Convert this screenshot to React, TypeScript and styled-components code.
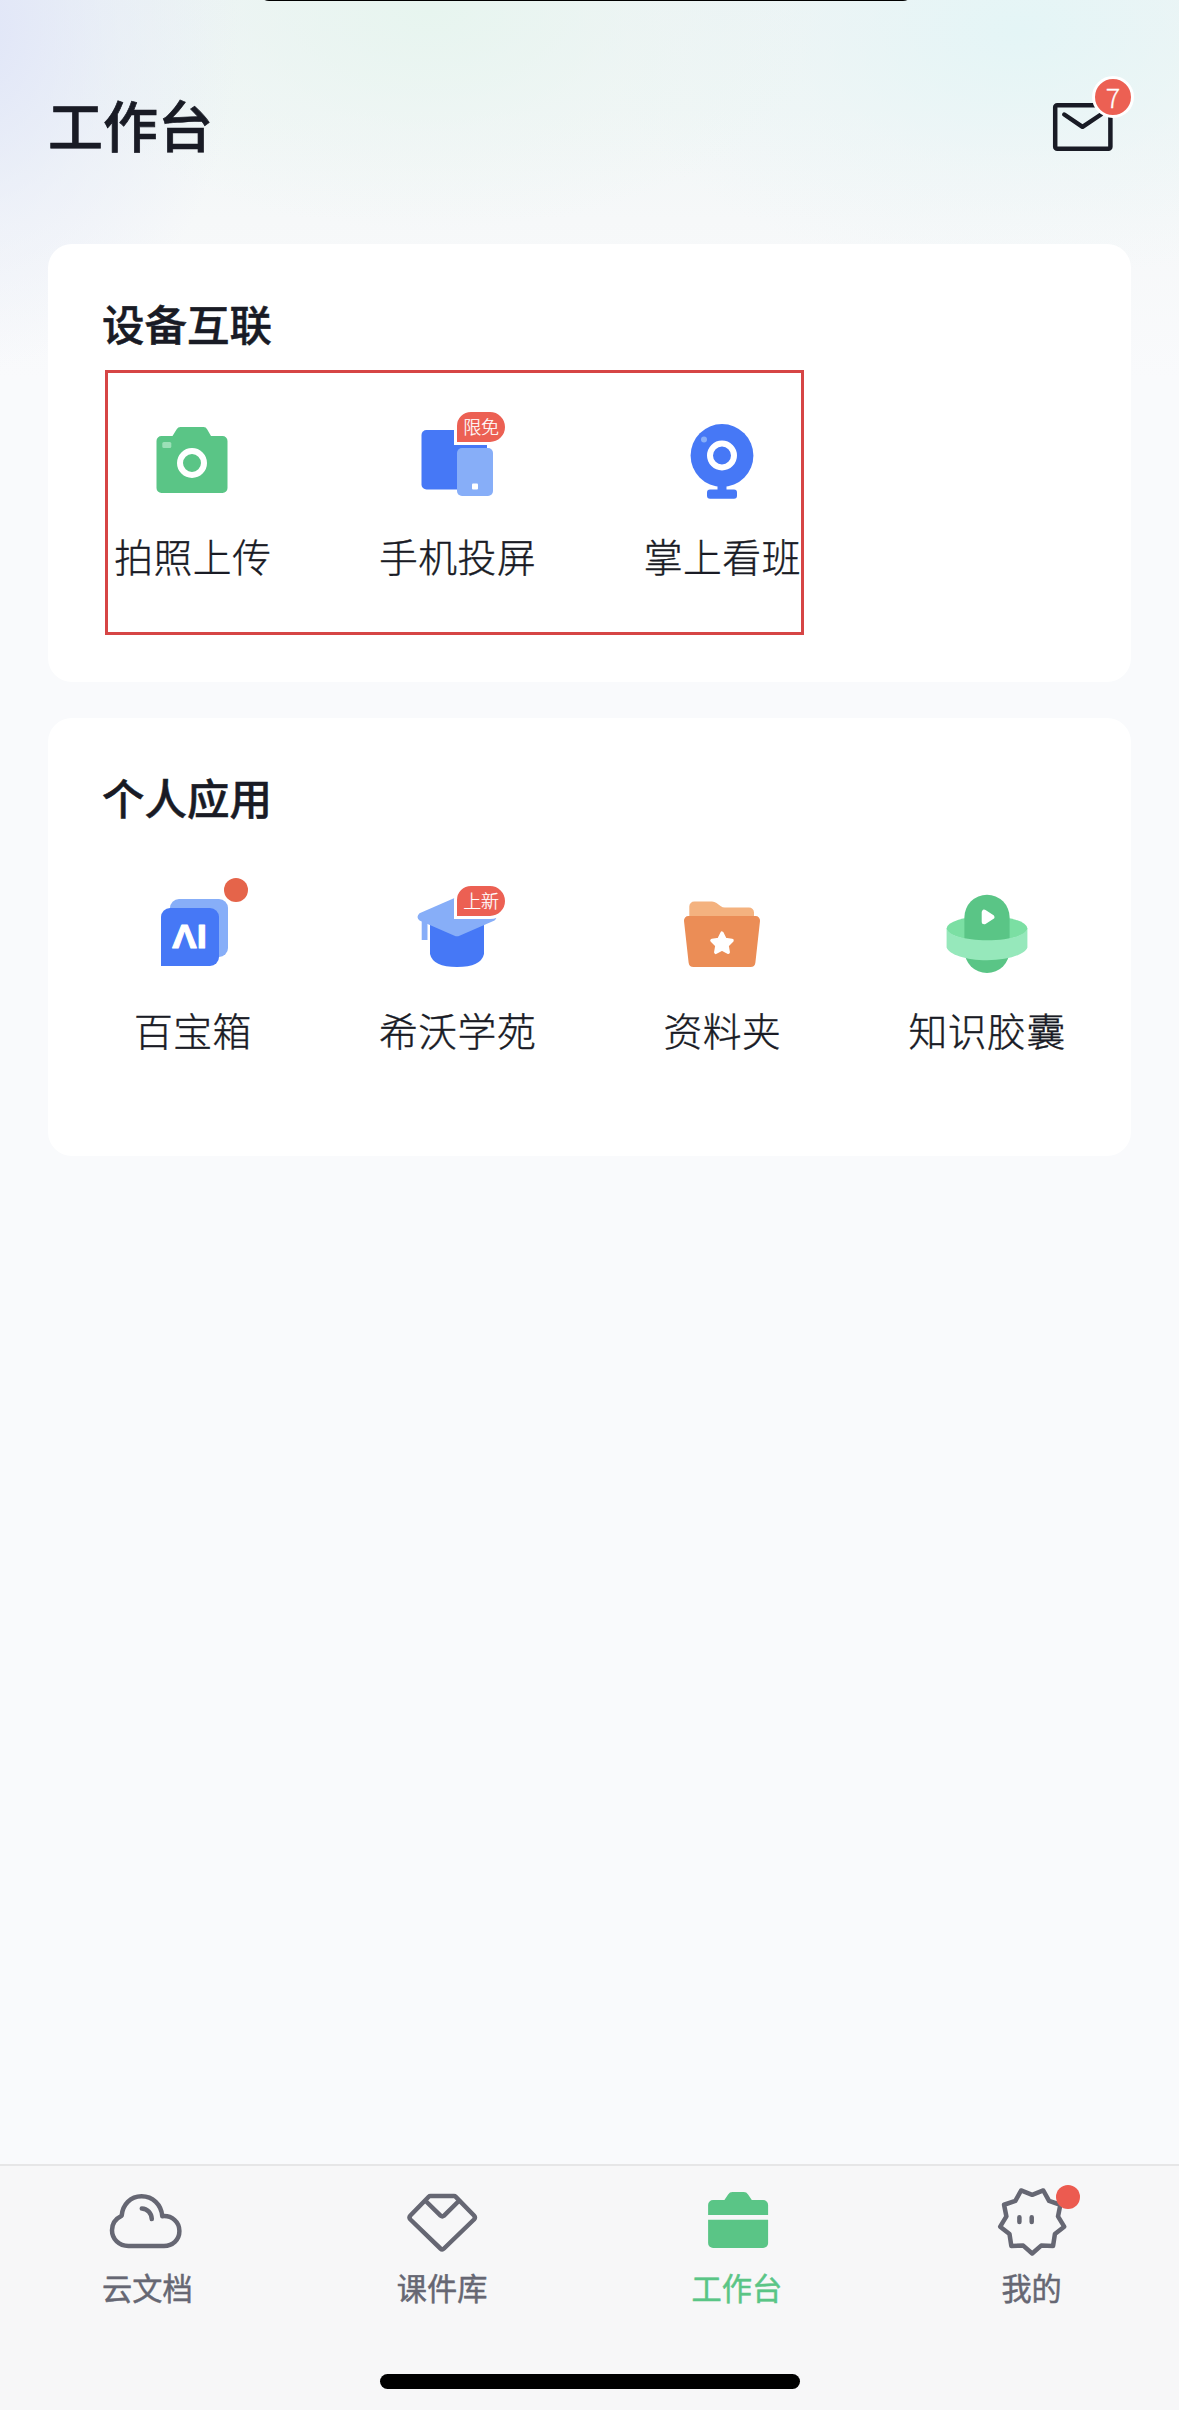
import React from "react";
import styled, { createGlobalStyle } from "styled-components";

const GREEN = "#5ac586";
const BLUE = "#4678f6";
const SKY = "#87aef8";
const RED = "#ec6053";
const INK = "#191b25";
const SLATE = "#666773";

const GlobalStyle = createGlobalStyle`
  * { box-sizing: border-box; }
  body {
    margin: 0;
    background: #f9fafc;
    font-family: "Noto Sans CJK SC", "Noto Sans", sans-serif;
    color: ${INK};
  }
`;

const Screen = styled.div`
  position: relative;
  display: flex;
  flex-direction: column;
  width: 1179px;
  height: 2410px;
  overflow: hidden;
  background:
    radial-gradient(ellipse 270px 340px at -30px 30px, #e0e5f8 0%, rgba(228, 233, 248, 0.45) 55%, rgba(236, 240, 248, 0) 100%),
    radial-gradient(ellipse 400px 220px at 430px 10px, #e7f5ef 0%, rgba(234, 245, 241, 0.4) 55%, rgba(240, 246, 244, 0) 100%),
    radial-gradient(ellipse 420px 250px at 1020px 30px, #e4f5f6 0%, rgba(232, 245, 246, 0.4) 55%, rgba(240, 247, 248, 0) 100%),
    linear-gradient(180deg, #eef4f5 0, #f1f6f6 110px, #f6f8f9 220px, #f9fafc 380px);
`;

const Notch = styled.div`
  position: absolute;
  top: -19px;
  left: 259px;
  width: 654px;
  height: 20px;
  border-radius: 10px;
  background: #000;
`;

const Header = styled.header`
  display: flex;
  align-items: center;
  justify-content: space-between;
  height: 244px;
  padding: 6px 48px 0;
`;

const Title = styled.h1`
  margin: 0 0 5px;
  font-size: 55px;
  line-height: 80px;
  font-weight: 500;
  -webkit-text-stroke: 0.7px currentColor;
`;

const MailButton = styled.div`
  position: relative;
  display: flex;
  width: 80px;
  height: 46px;
`;

const CountBadge = styled.span`
  position: absolute;
  top: -26px;
  left: 41px;
  width: 42px;
  height: 42px;
  border: 3px solid #fff;
  border-radius: 50%;
  background: ${RED};
  color: #fff;
  font-size: 27px;
  font-weight: 300;
  line-height: 35px;
  text-align: center;
  -webkit-text-stroke: 0.3px currentColor;
`;

const Main = styled.main`
  flex: 1;
  display: flex;
  flex-direction: column;
  gap: 36px;
  padding: 0 48px;
`;

const Card = styled.section`
  position: relative;
  height: 438px;
  padding: 0 12px;
  border-radius: 24px;
  background: #fff;
`;

const CardTitle = styled.h2`
  margin: 0;
  padding: 48px 42px 0;
  font-size: 42.5px;
  line-height: 62px;
  font-weight: 500;
  -webkit-text-stroke: 0.5px currentColor;
`;

const AppGrid = styled.div`
  display: grid;
  grid-template-columns: repeat(4, 1fr);
  padding-top: 46px;
`;

const AppItem = styled.div`
  display: flex;
  flex-direction: column;
  align-items: center;
`;

const IconBox = styled.div`
  position: relative;
  display: flex;
  width: 120px;
  height: 120px;
`;

const AppLabel = styled.span`
  margin-top: 7px;
  padding-left: 1px;
  font-size: 38.8px;
  letter-spacing: 0.5px;
  line-height: 56px;
  font-weight: 300;
  white-space: nowrap;
  -webkit-text-stroke: 0.4px currentColor;
`;

const TagBadge = styled.span`
  position: absolute;
  top: 9px;
  left: 57px;
  width: 54px;
  height: 36px;
  border: 3px solid #fff;
  border-radius: 17px 18px 18px 0;
  background: ${RED};
  color: #fff;
  font-size: 18px;
  font-weight: 300;
  line-height: 29px;
  text-align: center;
  white-space: nowrap;
  -webkit-text-stroke: 0.2px currentColor;
`;

const Dot = styled.span<{ $x: number; $y: number; $color: string }>`
  position: absolute;
  left: ${(p) => p.$x}px;
  top: ${(p) => p.$y}px;
  width: 24px;
  height: 24px;
  border-radius: 50%;
  background: ${(p) => p.$color};
`;

const Highlight = styled.div`
  position: absolute;
  left: 57px;
  top: 126px;
  width: 699px;
  height: 265px;
  border: 3px solid #d64545;
`;

const TabBar = styled.nav`
  display: grid;
  grid-template-columns: repeat(4, 1fr);
  grid-template-rows: 199px 1fr;
  height: 246px;
  border-top: 2px solid #e6e6e7;
  background: #f7f7f8;
`;

const Tab = styled.div<{ $active?: boolean }>`
  display: flex;
  flex-direction: column;
  align-items: center;
  padding-top: 14px;
  color: ${(p) => (p.$active ? GREEN : SLATE)};
`;

const TabIcon = styled.div`
  position: relative;
  display: flex;
  width: 90px;
  height: 90px;
`;

const TabLabel = styled.span`
  margin-top: -2px;
  font-size: 30.2px;
  line-height: 38px;
  font-weight: 400;
  -webkit-text-stroke: 0.5px currentColor;
`;

const HomeIndicator = styled.div`
  grid-column: 1 / -1;
  justify-self: center;
  margin-top: 9px;
  width: 420px;
  height: 15px;
  border-radius: 8px;
  background: #000;
`;

const AppSvg = ({ children }: { children: React.ReactNode }) => (
  <svg width="120" height="120" viewBox="0 0 120 120" fill="none">
    {children}
  </svg>
);

const TabSvg = ({ children }: { children: React.ReactNode }) => (
  <svg
    width="90"
    height="90"
    viewBox="0 0 90 90"
    fill="none"
    stroke="currentColor"
    strokeWidth="4.5"
    strokeLinejoin="round"
  >
    {children}
  </svg>
);

const MailIcon = () => (
  <svg width="62" height="52" viewBox="0 0 62 52" fill="none" stroke={INK} strokeWidth="4.5">
    <rect x="4.2" y="3.3" width="55.2" height="43.5" rx="2" />
    <path d="M13.3 12.5 31.5 24.8 50 12.5" strokeLinecap="round" strokeLinejoin="round" />
  </svg>
);

const CameraIcon = () => (
  <AppSvg>
    <path
      d="M30 36h10.5l4.2-6.8Q46 27 48.500 27h23q2.500 0 3.600 2.200L79 36h11.500a5 5 0 0 1 5 5v47a5 5 0 0 1-5 5h-61a5 5 0 0 1-5-5V41a5 5 0 0 1 5-5z"
      fill={GREEN}
    />
    <rect x="30.300" y="42" width="9" height="6" rx="1.500" fill="#9be0b7" />
    <circle cx="60" cy="63" r="12" stroke="#fff" strokeWidth="6" />
  </AppSvg>
);

const CastIcon = () => (
  <AppSvg>
    <rect x="24.500" y="30" width="65.500" height="59.500" rx="5" fill={BLUE} />
    <rect x="60" y="48" width="36" height="48" rx="5" fill={SKY} />
    <rect x="75" y="83.500" width="6" height="6" rx="1" fill="#fff" />
  </AppSvg>
);

const WebcamIcon = () => (
  <AppSvg>
    <circle cx="60" cy="55.500" r="31.400" fill={BLUE} />
    <path d="M55.500 84h9v7h-9z" fill={BLUE} />
    <rect x="45" y="89.500" width="30" height="9.200" rx="3" fill={BLUE} />
    <circle cx="60" cy="55.500" r="12" stroke="#fff" strokeWidth="6" />
    <circle cx="42" cy="39.500" r="3" fill={SKY} />
  </AppSvg>
);

const ToolboxIcon = () => (
  <AppSvg>
    <rect x="38" y="25" width="58" height="58" rx="9" fill={SKY} />
    <path d="M38 34H78a9 9 0 0 1 9 9v40a9 9 0 0 1-9 9H29V43a9 9 0 0 1 9-9z" fill={BLUE} />
    <text
      x="40.300"
      y="74.300"
      fill="#fff"
      stroke="#fff"
      strokeWidth="1"
      strokeLinejoin="round"
      textLength="34.500"
      lengthAdjust="spacingAndGlyphs"
      fontFamily="Liberation Sans, sans-serif"
      fontSize="32.500"
      fontWeight="700"
    >
      ΛI
    </text>
  </AppSvg>
);

const AcademyIcon = () => (
  <AppSvg>
    <path d="M33 42h54v38q-3 13-27 13T33 80z" fill={BLUE} />
    <path d="M24.700 44h5.800v22h-5.800z" fill={SKY} />
    <path
      d="M22.500 39.200 57.500 24q2.500-1 5 0l35 15.200q4 3.800 0 7.300L62.500 61.800q-2.500 1-5 0L22.500 46.500q-4-3.500 0-7.300z"
      fill={SKY}
    />
  </AppSvg>
);

const FolderIcon = () => (
  <AppSvg>
    <path
      d="M27.300 50V32.500a5 5 0 0 1 5-5H50q2.500 0 4.500 1.500l4 3q2 1.500 4.500 1.500h24a5 5 0 0 1 5 5V50z"
      fill="#f4b27f"
    />
    <path
      d="M26.500 42h67a4.500 4.500 0 0 1 4.500 5l-4.600 41.500a5 5 0 0 1-5 4.500H31.600a5 5 0 0 1-5-4.500L22 47a4.500 4.500 0 0 1 4.500-5z"
      fill="#eb8d56"
    />
    <path
      d="m60 59.200 3.100 6.300 6.900 1-5 4.900 1.200 6.900-6.200-3.300-6.200 3.300 1.200-6.900-5-4.900 6.900-1z"
      fill="#fff"
      stroke="#fff"
      strokeWidth="3.500"
      strokeLinejoin="round"
    />
  </AppSvg>
);

const CapsuleIcon = () => (
  <AppSvg>
    <ellipse cx="60" cy="54.500" rx="40.400" ry="12.500" fill="#7bdfa3" />
    <rect x="37.400" y="20.700" width="45.200" height="78.300" rx="22.600" fill={GREEN} />
    <path
      d="M19.600 54C20 61 38 66.300 60 66.300S100 61 100.400 54V73.500C98 80.500 81 86.300 60 86.300S22 80.500 19.600 73.500z"
      fill="#96e8bb"
    />
    <path
      d="M57.200 38.200v9.600l7.700-4.800z"
      fill="#fff"
      stroke="#fff"
      strokeWidth="5"
      strokeLinejoin="round"
    />
  </AppSvg>
);

const CloudIcon = () => (
  <TabSvg>
    <path d="M19.700 35.700C20.500 24.500 28.500 16.300 39.600 16.300S59.300 24.500 60.300 36.200C70 35.300 77.400 42 77.400 51S70.500 65.900 62 65.900H26.500C17 65.900 10 59 10 50.200 10 44 13.500 38.700 19.700 35.700z" />
    <path d="M39.800 28.500c5.500.2 9.800 4.500 10 10.600" strokeLinecap="round" />
  </TabSvg>
);

const CoursewareIcon = () => (
  <TabSvg>
    <path d="M33.500 16H57q1 0 1.800.8L77 35.500q1.800 2 0 4L47 68.500q-1.800 1.700-3.600 0L13.400 39.500q-1.800-2 0-4L31.700 16.800Q32.500 16 33.500 16z" />
    <path d="M29.200 21.500 43.800 35.800q1.500 1.200 3 0L61.300 21.500" />
  </TabSvg>
);

const WorkbenchIcon = () => (
  <TabSvg>
    <g fill="currentColor" stroke="none">
      <path d="M16.100 35V25a5 5 0 0 1 5-5h11.300l3.700-5.600Q37.700 12 40.500 12h11.200q2.800 0 4.400 2.400L59.800 20h11.300a5 5 0 0 1 5 5v10z" />
      <path d="M16.100 39.700h60V63a5 5 0 0 1-5 5h-50a5 5 0 0 1-5-5z" />
    </g>
  </TabSvg>
);

const burst = Array.from({ length: 18 }, (_, i) => {
  const angle = (i * Math.PI) / 9;
  const radius = i % 2 === 0 ? 32.5 : 26.2;
  return `${45.2 + radius * Math.sin(angle)},${41 + radius * Math.cos(angle)}`;
}).join(" ");

const ProfileIcon = () => (
  <TabSvg>
    <polygon points={burst} />
    <path d="M32.400 37.300v4.800M44.700 37.300v4.800" strokeLinecap="round" />
  </TabSvg>
);

type AppEntry = { label: string; icon: React.ReactNode; tag?: string; dot?: boolean };

const deviceApps: AppEntry[] = [
  { label: "拍照上传", icon: <CameraIcon /> },
  { label: "手机投屏", icon: <CastIcon />, tag: "限免" },
  { label: "掌上看班", icon: <WebcamIcon /> },
];

const personalApps: AppEntry[] = [
  { label: "百宝箱", icon: <ToolboxIcon />, dot: true },
  { label: "希沃学苑", icon: <AcademyIcon />, tag: "上新" },
  { label: "资料夹", icon: <FolderIcon /> },
  { label: "知识胶囊", icon: <CapsuleIcon /> },
];

const tabs = [
  { label: "云文档", icon: <CloudIcon /> },
  { label: "课件库", icon: <CoursewareIcon /> },
  { label: "工作台", icon: <WorkbenchIcon />, active: true },
  { label: "我的", icon: <ProfileIcon />, dot: true },
];

const AppSection = ({
  title,
  apps,
  highlighted,
}: {
  title: string;
  apps: AppEntry[];
  highlighted?: boolean;
}) => (
  <Card>
    <CardTitle>{title}</CardTitle>
    <AppGrid>
      {apps.map((app) => (
        <AppItem key={app.label}>
          <IconBox>
            {app.icon}
            {app.tag && <TagBadge>{app.tag}</TagBadge>}
            {app.dot && <Dot $x={91.5} $y={4} $color="#e5644a" />}
          </IconBox>
          <AppLabel>{app.label}</AppLabel>
        </AppItem>
      ))}
    </AppGrid>
    {highlighted && <Highlight />}
  </Card>
);

export default function App() {
  return (
    <>
      <GlobalStyle />
      <Screen>
        <Notch />
        <Header>
          <Title>工作台</Title>
          <MailButton>
            <MailIcon />
            <CountBadge>7</CountBadge>
          </MailButton>
        </Header>
        <Main>
          <AppSection title="设备互联" apps={deviceApps} highlighted />
          <AppSection title="个人应用" apps={personalApps} />
        </Main>
        <TabBar>
          {tabs.map((tab) => (
            <Tab key={tab.label} $active={tab.active}>
              <TabIcon>
                {tab.icon}
                {tab.dot && <Dot $x={69.5} $y={5} $color="#ec5b50" />}
              </TabIcon>
              <TabLabel>{tab.label}</TabLabel>
            </Tab>
          ))}
          <HomeIndicator />
        </TabBar>
      </Screen>
    </>
  );
}
